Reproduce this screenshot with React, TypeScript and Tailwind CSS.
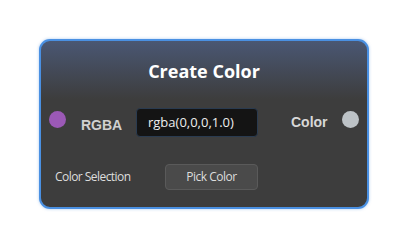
import React from "react";

export default function App() {
  return (
    <div className="w-[408px] h-[248px] bg-white pt-[39px] pl-[39px]">
      <div className="w-[330px] h-[170px] rounded-[11px] border-2 border-[#4a90e2] bg-[linear-gradient(180deg,#4a5773_0px,#3d3d3d_58px)] bg-[#3d3d3d] shadow-[0_0_3px_rgba(74,144,226,0.5)] flex flex-col">
        <div className="pt-[18px] h-[42px] text-center text-white font-bold text-[18px] leading-[24px] [font-family:'Open_Sans',sans-serif]">
          Create Color
        </div>
        <div className="mt-[25px] flex items-start pl-[8px]">
          <div className="mt-[3px] w-[17px] h-[17px] rounded-full bg-[#9b59b6]" />
          <div className="ml-[15px] mt-[9px] w-[55px] text-[14px] leading-[16px] font-bold text-[#d0d0d0] [font-family:'Liberation_Sans',Arial,sans-serif]">
            RGBA
          </div>
          <div className="w-[122px] h-[29px] rounded-[4px] border border-[#2a3b50] bg-[#141414] flex items-center pl-[11px] text-[13px] text-[#eeeeee] [font-family:'Open_Sans',sans-serif]">
            rgba(0,0,0,1.0)
          </div>
          <div className="ml-[33px] mt-[6px] w-[51px] text-[14px] leading-[16px] font-bold text-[#d8d8d8] [font-family:'Liberation_Sans',Arial,sans-serif]">
            Color
          </div>
          <div className="mt-[3px] w-[17px] h-[17px] rounded-full bg-[#bdc3c7]" />
        </div>
        <div className="mt-[27px] flex items-center pl-[14px]">
          <div className="w-[110px] text-[12px] leading-[16px] tracking-[-0.55px] text-[#dddddd] [font-family:'Open_Sans',sans-serif]">
            Color Selection
          </div>
          <div className="w-[93px] h-[26px] rounded-[4px] border border-[#5a5a5a] bg-[#4a4a4a] flex items-center justify-center text-[12px] tracking-[-0.5px] text-[#dddddd] [font-family:'Open_Sans',sans-serif]">
            Pick Color
          </div>
        </div>
      </div>
    </div>
  );
}
